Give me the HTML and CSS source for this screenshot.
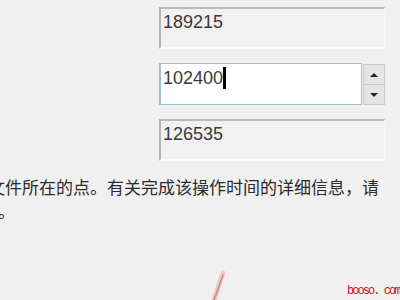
FILE: index.html
```html
<!DOCTYPE html>
<html>
<head>
<meta charset="utf-8">
<link rel="stylesheet" href="styles.css">
</head>
<body>
<div class="page">
  <div class="fields">
    <div class="box ro"><span class="val">189215</span></div>
    <div class="spin-row">
      <div class="box edit"><span class="val">102400</span><span class="caret"></span></div>
      <div class="spin">
        <div class="btn"><span class="tri up"></span></div>
        <div class="btn"><span class="tri down"></span></div>
      </div>
    </div>
    <div class="box ro"><span class="val">126535</span></div>
  </div>
  <div class="desc">
    <div class="l1">文件所在的点。有关完成该操作时间的详细信息，请</div>
    <div class="l2">。</div>
  </div>
  <svg class="mark" width="40" height="40" viewBox="0 0 40 40">
    <line x1="24" y1="40" x2="33" y2="13" stroke="#f4c8c8" stroke-width="5" stroke-linecap="round"/>
    <line x1="24" y1="40" x2="33" y2="15" stroke="#c98a8a" stroke-width="1.6" stroke-linecap="round"/>
  </svg>
  <div class="wm">booso. com</div>
</div>
</body>
</html>
```

FILE: styles.css
```css
html, body {
  margin: 0;
  padding: 0;
}
body {
  background: #f0f0f0;
  width: 400px;
  height: 300px;
  overflow: hidden;
  font-family: "Noto Sans CJK SC", "Noto Sans", sans-serif;
}
.page {
  position: relative;
  width: 400px;
  height: 300px;
  overflow: hidden;
}
.fields {
  display: flex;
  flex-direction: column;
  gap: 14px;
  padding: 7px 0 0 159px;
  width: 226px;
}
.box {
  box-sizing: border-box;
  height: 42px;
  padding: 3px 0 0 2px;
  font-family: "Liberation Sans", "DejaVu Sans", sans-serif;
  font-size: 18px;
  color: #3a3a3a;
  display: flex;
  align-items: flex-start;
}
.ro {
  background: #f1f1f1;
  border-top: 2px solid #b9b9b9;
  border-left: 2px solid #b4b4b4;
  border-right: 1px solid #f7f7f7;
  border-bottom: 2px solid #fbfbfb;
}
.spin-row {
  display: flex;
  height: 42px;
}
.edit {
  flex: 1;
  background: #ffffff;
  border: 1px solid #9cbfd3;
  border-left-width: 2px;
  padding-top: 4px;
}
.val {
  line-height: 20px;
}
.caret {
  display: inline-block;
  width: 3px;
  height: 22px;
  background: #000;
  margin-top: -1px;
}
.spin {
  width: 23px;
  display: flex;
  flex-direction: column;
  padding: 1px 0 0 1px;
  box-sizing: border-box;
}
.btn {
  flex: 1;
  background: #e4e4e4;
  border: 1px solid #cacaca;
  display: flex;
  align-items: center;
  justify-content: center;
}
.btn + .btn {
  border-top: 0;
}
.tri {
  width: 0;
  height: 0;
  border-left: 4px solid transparent;
  border-right: 4px solid transparent;
}
.tri.up {
  border-bottom: 4px solid #222;
}
.tri.down {
  border-top: 4px solid #222;
}
.desc {
  margin: 14px 0 0 -12px;
  font-size: 17px;
  line-height: 24px;
  color: #2b2b2b;
  white-space: nowrap;
}
.l2 {
  margin-left: 10px;
}
.mark {
  position: absolute;
  left: 190px;
  top: 260px;
}
.wm {
  position: absolute;
  left: 347px;
  top: 284px;
  white-space: nowrap;
  font-family: "Liberation Mono", "DejaVu Sans Mono", monospace;
  font-size: 12px;
  letter-spacing: -1.95px;
  color: #cc1111;
}
```
